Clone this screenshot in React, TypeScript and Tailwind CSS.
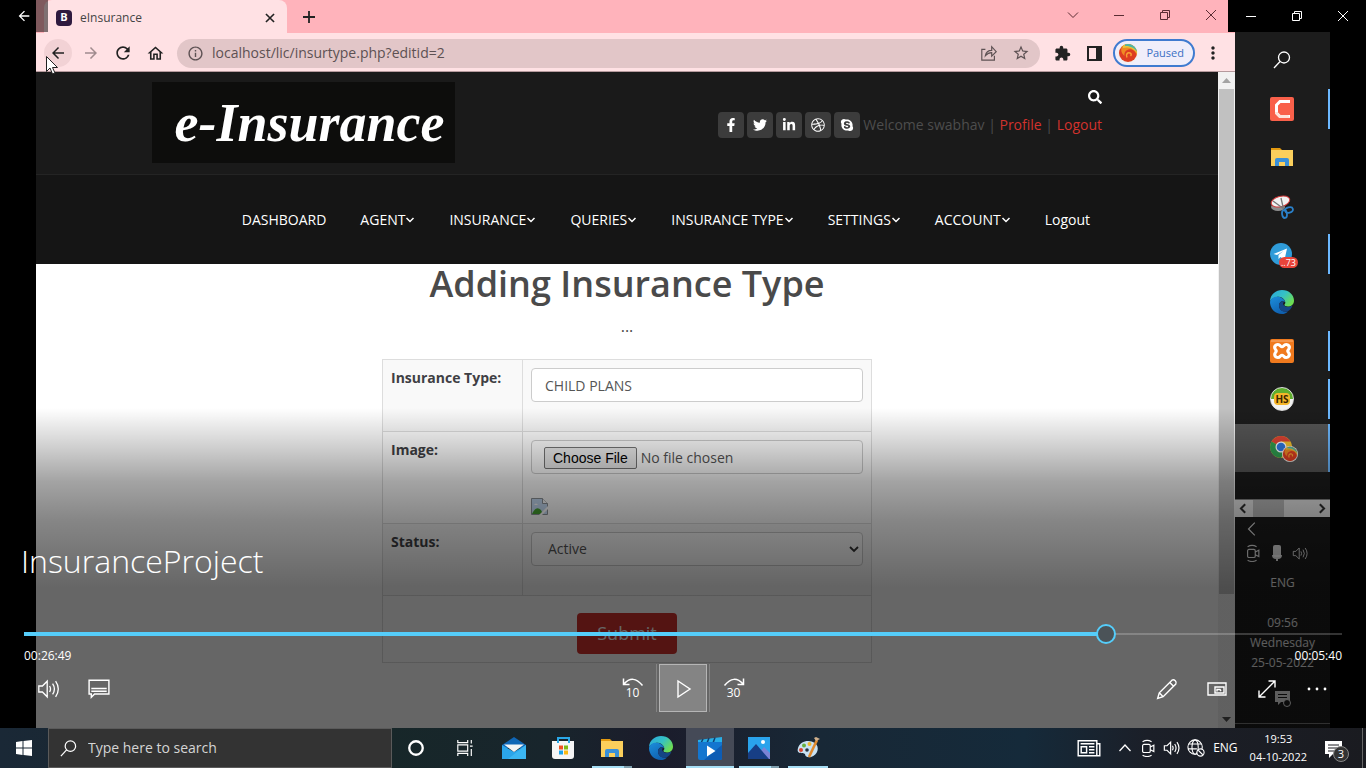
import React, { useState } from "react";
import type { ReactNode } from "react";
import { FaFacebookF, FaTwitter, FaLinkedinIn, FaDribbble, FaSkype, FaSearch } from "react-icons/fa";
import { MdArrowBack, MdArrowForward, MdRefresh, MdOutlineHome, MdInfoOutline, MdStarBorder, MdExtension, MdMoreVert } from "react-icons/md";

const ui = "font-['Open_Sans','Noto_Sans',sans-serif]";

/* ---------- line icons ---------- */

function Glyph({ size = 20, width = 1, children }: { size?: number; width?: number; children: ReactNode }) {
  return (
    <svg width={size} height={size} viewBox="0 0 20 20" fill="none" stroke="currentColor" strokeWidth={width} aria-hidden="true" className="shrink-0">
      {children}
    </svg>
  );
}

const Minimize = () => <Glyph><path d="M5 10.5h10" /></Glyph>;
const Restore = () => <Glyph><path d="M5.5 7.5h7v7h-7zM7.5 7.5v-2h7v7h-2" /></Glyph>;
const Close = () => <Glyph><path d="M5 5l10 10M15 5L5 15" /></Glyph>;
const Magnifier = ({ size = 20 }: { size?: number }) => (
  <Glyph size={size} width={1.3}><circle cx="12" cy="7.5" r="5.5" /><path d="M8 11.5L2 18" /></Glyph>
);
const Speaker = ({ size = 24, width = 1.1 }: { size?: number; width?: number }) => (
  <Glyph size={size} width={width}>
    <path d="M1.5 7.5h3L8.500 3.500v13L4.500 12.500h-3zM10.500 7.500q1.500 2.500 0 5M13 5.500q3 4.500 0 9M15.500 3.500q4.500 6.500 0 13" />
  </Glyph>
);
const Camera = () => (
  <Glyph size={18} width={1.3}><rect x="4" y="6" width="8.500" height="9" rx="1.500" /><path d="M12.500 9l4-2v7l-4-2M4 3q5-3 10 0M4 18q5 3 10 0" /></Glyph>
);

/* ---------- app icons ---------- */

function FolderIcon() {
  return (
    <svg width="24" height="22" viewBox="0 0 24 22" aria-hidden="true">
      <path d="M1 2h9l2 2h11v4H1z" fill="#e39a10" />
      <rect x="1" y="4" width="22" height="16" fill="#fbcf5c" />
      <path d="M5 20v-6q0-2 2-2h10q2 0 2 2v6h-4v-4H9v4z" fill="#3a90d8" />
    </svg>
  );
}

function EdgeIcon() {
  return (
    <svg width="26" height="26" viewBox="0 0 26 26" aria-hidden="true">
      <defs>
        <linearGradient id="edgeTop" x1="0" y1="0" x2="1" y2="0.6">
          <stop offset="0" stopColor="#2aa6dc" /><stop offset="0.55" stopColor="#35c1c5" /><stop offset="1" stopColor="#6ddd52" />
        </linearGradient>
        <linearGradient id="edgeSide" x1="0" y1="0" x2="0.6" y2="1">
          <stop offset="0" stopColor="#1c8fdc" /><stop offset="1" stopColor="#0f5fae" />
        </linearGradient>
      </defs>
      <path d="M1 12C1.500 5 7 1 13 1c7 0 12 5 12 10.500 0 4-3 6-6 6-2.500 0-4-1-3.500-2 1-1 1-2 .6-3C15 9 11 7 7.500 8 4 8.700 2 10.500 1 12z" fill="url(#edgeTop)" />
      <path d="M1 13c.5-4 5-6 8.500-5.200C13 8.500 16 11 16 13c-3-2-6 0-6 3.500 0 4 4 7 9 6C17 24.500 15 25 13 25 6 25 1 19.500 1 13z" fill="url(#edgeSide)" />
      <path d="M10 16.500c0-3 2.500-4.700 5-4.200-.5 1.500-1.500 2.500-.5 3.700 2 2.500 6 2.400 9 .6-1 3-3 5-5 6-5 1-8.500-2.100-8.500-6.100z" fill="#154584" />
    </svg>
  );
}

function CamtasiaIcon() {
  return (
    <svg width="26" height="26" viewBox="0 0 26 26" aria-hidden="true">
      <rect x="1" y="1" width="24" height="24" rx="2" fill="#f9604a" />
      <path d="M21 5.500H11L7.500 9v8l3.500 3.500h10" fill="none" stroke="#fff" strokeWidth="3" />
      <path d="M6 16h3v1l2.300 2h8L21 22H10.300L6 17.700z" fill="#fde3da" />
    </svg>
  );
}

function SnipIcon() {
  return (
    <svg width="26" height="26" viewBox="0 0 26 26" aria-hidden="true">
      <ellipse cx="9" cy="14" rx="7" ry="4" fill="#8d8d8d" />
      <ellipse cx="11.500" cy="8.500" rx="9.500" ry="5.200" fill="#f2f2f2" stroke="#d33b3b" transform="rotate(-14 11.500 8.500)" />
      <path d="M4 8l11 8M12 5l2.500 11" stroke="#777" strokeWidth="1.300" />
      <ellipse cx="20" cy="17" rx="4" ry="2.600" fill="none" stroke="#2a80c9" strokeWidth="1.800" transform="rotate(-15 20 17)" />
      <ellipse cx="15.500" cy="21" rx="2.400" ry="4" fill="none" stroke="#2a80c9" strokeWidth="1.800" transform="rotate(-8 15.500 21)" />
    </svg>
  );
}

function TelegramIcon() {
  return (
    <span className="relative block">
      <svg width="26" height="26" viewBox="0 0 26 26" aria-hidden="true">
        <circle cx="12" cy="13" r="11" fill="#2f9bd8" />
        <path d="M4.500 13L18 7.500l-2.500 11.500-4-3-2 2v-4l5-4-6.500 4z" fill="#fff" />
      </svg>
      <span className="absolute -right-[3px] -bottom-px rounded-full bg-[#e8443a] px-[2px] text-[9px] leading-[11px] text-white">..73</span>
    </span>
  );
}

function XamppIcon() {
  return (
    <svg width="26" height="26" viewBox="0 0 26 26" aria-hidden="true">
      <rect x="1" y="1" width="24" height="24" rx="2" fill="#f07a1e" />
      <path d="M2 3h22" stroke="#f9b27a" />
      <path d="M7 7q2.500-1.500 4.500 1 1.500 1.500 3 0 2-2.500 4.500-1 2.500 2 .5 4.500-1.500 1.500 0 3 2 2.500-.5 4.500-2.500 1.500-4.500-1-1.500-1.500-3 0-2 2.500-4.500 1-2.500-2-.5-4.500 1.500-1.500 0-3-2-2.500.5-4.500z" fill="none" stroke="#fff" strokeWidth="3" />
    </svg>
  );
}

function HeidiIcon() {
  return (
    <span className="flex size-6 items-center justify-center rounded-full border border-[#ddd] bg-[linear-gradient(#5fae2e_50%,#f2f2f2_50%)]">
      <span className="rounded-sm bg-[#f4b62a] px-px text-[10px] leading-3 font-bold text-[#3a2500]">HS</span>
    </span>
  );
}

function ProfileSwirl({ size = 18 }: { size?: number }) {
  return (
    <svg width={size} height={size} viewBox="0 0 20 20" aria-hidden="true" className="shrink-0">
      <circle cx="10" cy="10" r="10" fill="#f3efe9" />
      <circle cx="10" cy="10" r="9" fill="#dd3d22" />
      <path d="M4 3.500a9 9 0 0 1 14.500 9C18 8 14 5.500 10.500 6.500 7 7.500 6 10 6.500 13 3 10.500 2.500 6.500 4 3.500z" fill="#f08a24" />
      <path d="M5 2.600a9 9 0 0 1 13.900 8.400C17.500 6.500 12 3 5 5z" fill="#e6c33a" />
      <path d="M7 1.500a9 9 0 0 1 11.800 7C16.500 5 12 2.600 7 3z" fill="#4db5a8" />
      <path d="M9 14.500c-1.500-3 .5-5.500 3-4.500 1.500.6 1.500 2 .5 2.800" fill="none" stroke="#f9a234" strokeWidth="1.500" />
    </svg>
  );
}

function ChromeIcon() {
  return (
    <span className="relative block">
      <svg width="26" height="26" viewBox="0 0 26 26" aria-hidden="true">
        <circle cx="12" cy="12" r="11" fill="#f7c32e" />
        <path d="M12 12L2.500 6.500A11 11 0 0 1 21.500 6.500H12z" fill="#e04434" />
        <path d="M2.500 6.500A11 11 0 0 0 12 23l5-8-5-3z" fill="#2f9e50" />
        <circle cx="12" cy="12" r="5.500" fill="#fff" /><circle cx="12" cy="12" r="4.300" fill="#2f78e0" />
      </svg>
      <span className="absolute -right-[3px] -bottom-px"><ProfileSwirl size={16} /></span>
    </span>
  );
}

function MailIcon() {
  return (
    <svg width="24" height="24" viewBox="0 0 24 24" aria-hidden="true">
      <path d="M0 9l12-8 12 8v3H0z" fill="#1066b5" />
      <path d="M0 9l12 7 12-7v14H0z" fill="#2ba5ea" /><path d="M24 9v14H6z" fill="#43bdf5" opacity=".7" />
      <path d="M2 8.500h20l-10 7.500z" fill="#f4f4f4" />
    </svg>
  );
}

function StoreIcon() {
  return (
    <svg width="24" height="24" viewBox="0 0 24 24" aria-hidden="true">
      <path d="M7 8V2h11v6" fill="none" stroke="#2aa8e8" strokeWidth="2" />
      <path d="M1 5h22v15q0 3-3 3H4q-3 0-3-3z" fill="#f5f5f5" />
      <path d="M7 5v2M18 5v2" stroke="#2aa8e8" strokeWidth="2" />
      <path d="M8 9.500h4v4H8z" fill="#f05123" /><path d="M13 9.500h4v4h-4z" fill="#7fba16" />
      <path d="M8 14.500h4v4H8z" fill="#1ba3e8" /><path d="M13 14.500h4v4h-4z" fill="#fbb912" />
    </svg>
  );
}

function MoviesIcon() {
  return (
    <svg width="24" height="24" viewBox="0 0 24 24" aria-hidden="true">
      <path d="M0 4l24-3v5H0z" fill="#29aee6" /><path d="M5 3L3 7M11 2L9 7M17 1.500L15 7" stroke="#11406f" strokeWidth="1.500" />
      <path d="M0 6h24v16q0 2-2 2H2q-2 0-2-2z" fill="#1476cf" /><path d="M24 9v13q0 2-2 2H6z" fill="#0d5cb4" />
      <path d="M9 9.500l8.500 5.500L9 20.500z" fill="#fff" />
    </svg>
  );
}

function PhotosIcon() {
  return (
    <svg width="24" height="24" viewBox="0 0 24 24" aria-hidden="true">
      <path d="M1 1h22v22H1z" fill="#2aa3ec" /><path d="M11 18l6-7 6 6v6H11z" fill="#7b83d6" />
      <path d="M1 17l8-9 13 15H1z" fill="#173e85" /><circle cx="16" cy="6" r="2" fill="#fff" />
    </svg>
  );
}

function PaintIcon() {
  return (
    <svg width="24" height="24" viewBox="0 0 24 24" aria-hidden="true">
      <path d="M2 12C4 5 13 3 19 7c5 4 3 12-4 14-4 1-6-1-6-3-2-2-9 1-7-6z" fill="#c9e2f3" />
      <circle cx="5" cy="14" r="2" fill="#d8442f" /><circle cx="8" cy="9.500" r="2" fill="#67b13f" />
      <circle cx="13.500" cy="8" r="2" fill="#f0b62c" /><circle cx="11" cy="14" r="1.800" fill="#26323e" />
      <path d="M13 21l8-17" stroke="#e08a2d" strokeWidth="2.600" /><path d="M20 5l-2-3 2-1 4 2z" fill="#d0b08c" />
    </svg>
  );
}

/* ---------- recorded browser ---------- */

function BrowserChrome() {
  return (
    <header className={`${ui} shrink-0`}>
      <div className="flex h-[33px] bg-[#ffb3bb] pl-2 text-[#222]">
        <div className="flex w-[243px] items-center rounded-t-lg bg-[#ffe1e4] pt-[2px] pr-2 pl-3">
          <span className="flex size-4 items-center justify-center rounded-sm bg-[#2f1a3f] text-[11px] font-bold text-white">B</span>
          <span className="ml-2 flex-1 text-xs text-[#444]">eInsurance</span>
          <button aria-label="Close tab" className="flex"><Glyph size={18} width={1.800}><path d="M5.500 5.500l9 9M14.500 5.500l-9 9" /></Glyph></button>
        </div>
        <button aria-label="New tab" className="ml-3"><Glyph width={1.800}><path d="M10 4v12M4 10h12" /></Glyph></button>
        <div className="mr-[14px] ml-auto flex items-center gap-[26px] pb-1 text-[#5a2d33]">
          <button aria-label="Search tabs"><Glyph><path d="M5 7.500l5 5 5-5" /></Glyph></button>
          <button aria-label="Minimize browser"><Minimize /></button>
          <button aria-label="Restore browser"><Restore /></button>
          <button aria-label="Close browser"><Close /></button>
        </div>
      </div>
      <div className="flex h-[39px] items-center border-b border-[#b59a9d] bg-[#ffe1e4] pt-[2px] pr-3 pl-2 text-[#222]">
        <button aria-label="Back" className="flex size-7 items-center justify-center rounded-full bg-[#f2d2d5]"><MdArrowBack size={18} /></button>
        <button aria-label="Forward" className="ml-[5px] flex size-7 items-center justify-center text-[#a08b8e]"><MdArrowForward size={18} /></button>
        <button aria-label="Reload" className="ml-1 flex size-7 items-center justify-center"><MdRefresh size={20} /></button>
        <button aria-label="Home" className="ml-1 flex size-7 items-center justify-center"><MdOutlineHome size={19} /></button>
        <div className="mr-[14px] ml-2 flex h-[29px] flex-1 items-center rounded-full bg-[#e2c6c8] px-[10px] text-[#5d5153]">
          <MdInfoOutline size={17} />
          <input aria-label="Address" defaultValue="localhost/lic/insurtype.php?editid=2" className="ml-2 min-w-0 flex-1 bg-transparent text-sm text-[#5d5153] outline-none" />
          <button aria-label="Share" className="mr-[14px]"><Glyph size={18} width={1.300}><path d="M6 6H2v12h14v-5M6 13q1-6 7-6V3l5 5.500-5 5v-4q-4 0-7 3.500z" /></Glyph></button>
          <button aria-label="Bookmark"><MdStarBorder size={18} /></button>
        </div>
        <button aria-label="Extensions" className="mr-4 flex"><MdExtension size={17} /></button>
        <button aria-label="Side panel" className="mr-[11px] flex"><svg width="15" height="15" viewBox="0 0 15 15" aria-hidden="true"><path d="M1 1h13v13H1z" fill="none" stroke="currentColor" strokeWidth="2" /><path d="M9 1h5v13H9z" fill="currentColor" /></svg></button>
        <button className="mr-2 flex h-7 items-center rounded-full border-2 border-[#3f7bd0] bg-[#f0eefa] pr-[9px] pl-[3px] text-[11px] text-[#3a6fc4]"><ProfileSwirl size={20} /><span className="ml-2">Paused</span></button>
        <button aria-label="Menu" className="flex"><MdMoreVert size={20} /></button>
      </div>
    </header>
  );
}

const menu = [
  { label: "DASHBOARD", drop: false }, { label: "AGENT", drop: true }, { label: "INSURANCE", drop: true },
  { label: "QUERIES", drop: true }, { label: "INSURANCE TYPE", drop: true }, { label: "SETTINGS", drop: true },
  { label: "ACCOUNT", drop: true }, { label: "Logout", drop: false },
];

const socials = [
  { name: "Facebook", Icon: FaFacebookF }, { name: "Twitter", Icon: FaTwitter }, { name: "LinkedIn", Icon: FaLinkedinIn },
  { name: "Dribbble", Icon: FaDribbble }, { name: "Skype", Icon: FaSkype },
];

function SiteHeader() {
  return (
    <div>
      <div className="flex h-[103px] justify-between border-b border-[#242424] bg-[#1a1a1a] px-[116px] pt-[10px]">
        <a href="#home" className="flex h-[81px] w-[303px] items-center justify-center bg-[#0d0d0c] pl-3 font-['Liberation_Serif',serif] text-[54px] leading-none font-bold text-white italic">e-Insurance</a>
        <div className="flex flex-col items-end">
          <button aria-label="Search" className="flex h-[30px] w-[14px] items-center text-white"><FaSearch size={14} /></button>
          <div className="flex items-center text-sm text-[#4d4d4d]">
            {socials.map(({ name, Icon }) => (
              <a key={name} href={`#${name}`} aria-label={name} className="mr-[3px] flex size-[26px] items-center justify-center rounded-sm bg-[#3c3c3c] text-white"><Icon size={14} /></a>
            ))}
            <span>Welcome swabhav&nbsp;|&nbsp;</span>
            <a href="#profile" className="text-[#d2322d]">Profile</a>
            <span>&nbsp;|&nbsp;</span>
            <a href="#logout" className="text-[#d2322d]">Logout</a>
          </div>
        </div>
      </div>
      <nav className="flex h-[89px] items-center justify-end gap-[34px] bg-[#151515] pr-32 text-sm text-white">
        {menu.map((m) => (
          <a key={m.label} href={`#${m.label}`} className="flex items-center whitespace-nowrap">
            {m.label}
            {m.drop && <svg width="10" height="6" viewBox="0 0 10 6" fill="none" stroke="currentColor" strokeWidth="1.500" aria-hidden="true"><path d="M1.500 1L5 4.500 8.500 1" /></svg>}
          </a>
        ))}
      </nav>
    </div>
  );
}

const field = "h-[34px] w-full rounded-sm border border-[#ccc] bg-white px-[13px] text-sm text-[#555]";
const head = "w-[140px] border border-[#ddd] px-2 py-2 text-left align-top text-sm font-bold text-[#3f3f44]";
const cell = "border border-[#ddd] p-2 align-top";

function InsuranceForm() {
  return (
    <main className="flex flex-col items-center bg-white">
      <h1 className="text-[36px] leading-10 font-semibold text-[#4a4a4a]">Adding Insurance Type</h1>
      <p className="mt-3 mb-[22px] text-base leading-[21px] text-[#4a4a4a]">...</p>
      <form onSubmit={(e) => e.preventDefault()}>
        <table className="w-[490px] border-collapse">
          <tbody>
            <tr className="h-[72px] bg-[#f9f9f9]">
              <th className={head}><label htmlFor="type">Insurance Type:</label></th>
              <td className={cell}><input id="type" className={field} defaultValue="CHILD PLANS" /></td>
            </tr>
            <tr className="h-[92px]">
              <th className={head}><label htmlFor="image">Image:</label></th>
              <td className={cell}>
                <input id="image" type="file" className={`${field} block pt-[6px] pl-3 file:mr-1 file:h-[22px] file:rounded-xs file:border file:border-solid file:border-[#767676] file:bg-[#efefef] file:px-2 file:font-['Liberation_Sans',sans-serif] file:text-sm file:leading-5 file:text-black`} />
                <svg width="17" height="17" viewBox="0 0 17 17" aria-label="Missing image" className="mt-6 block">
                  <path d="M.5.5h11l5 5v11H.5z" fill="#c6dcf5" stroke="#8d9399" /><path d="M11.500.5v5h5" fill="#fff" stroke="#8d9399" />
                  <path d="M1 16q4-9 9-4l2 4z" fill="#46a431" /><path d="M3 7q2-3 4 0z" fill="#fff" /><path d="M8 17l9-9v3l-6 6z" fill="#fff" />
                </svg>
              </td>
            </tr>
            <tr className="h-[72px] bg-[#f9f9f9]">
              <th className={head}><label htmlFor="status">Status:</label></th>
              <td className={cell}>
                <div className="grid items-center">
                  <select id="status" defaultValue="Active" className={`${field} col-start-1 row-start-1 appearance-none pl-4`}>
                    <option>Active</option><option>Inactive</option>
                  </select>
                  <svg width="10" height="7" viewBox="0 0 10 7" fill="none" stroke="#333" strokeWidth="1.800" aria-hidden="true" className="pointer-events-none col-start-1 row-start-1 mr-1 justify-self-end"><path d="M1 1l4 4 4-4" /></svg>
                </div>
              </td>
            </tr>
            <tr className="h-[67px]">
              <td colSpan={2} className="border border-[#ddd] pt-2 text-center">
                <button type="submit" className="h-[41px] rounded bg-[#d2322d] px-5 text-lg text-white">Submit</button>
              </td>
            </tr>
          </tbody>
        </table>
      </form>
    </main>
  );
}

function PageScrollbar() {
  return (
    <div className="flex w-[17px] shrink-0 flex-col items-center bg-[#f1f1f1] px-px" aria-hidden="true">
      <svg width="9" height="17" viewBox="0 0 9 17"><path d="M0 11l4.500-5L9 11z" fill="#a3a3a3" /></svg>
      <div className="w-full flex-[505] bg-[#c1c1c1]" />
      <div className="flex-[117]" />
      <svg width="9" height="17" viewBox="0 0 9 17"><path d="M0 6l4.500 5L9 6z" fill="#505050" /></svg>
    </div>
  );
}

const sideApps = [
  { name: "Search", icon: <Magnifier size={20} />, open: false, active: false },
  { name: "Camtasia", icon: <CamtasiaIcon />, open: true, active: false },
  { name: "File Explorer", icon: <FolderIcon />, open: false, active: false },
  { name: "Snipping Tool", icon: <SnipIcon />, open: false, active: false },
  { name: "Telegram", icon: <TelegramIcon />, open: true, active: false },
  { name: "Edge", icon: <EdgeIcon />, open: false, active: false },
  { name: "XAMPP", icon: <XamppIcon />, open: true, active: false },
  { name: "HeidiSQL", icon: <HeidiIcon />, open: true, active: false },
  { name: "Chrome", icon: <ChromeIcon />, open: true, active: true },
];

function RecordedTaskbar() {
  return (
    <aside className={`${ui} flex w-[95px] shrink-0 flex-col bg-[#1c1c1c] text-xs text-white`}>
      <div className="flex h-[472px] flex-col pt-9">
        {sideApps.map((a) => (
          <button key={a.name} aria-label={a.name} className={`flex flex-1 items-center ${a.active ? "bg-[#555]" : ""}`}>
            <span className="flex flex-1 justify-center pr-px">{a.icon}</span>
            <span className={`-ml-[2px] w-[2px] ${a.active ? "h-full" : "h-10"} ${a.open ? "bg-[#6cb8ff]" : ""}`} />
          </button>
        ))}
      </div>
      <div className="mt-[27px] flex h-[18px] items-center justify-between border-t border-[#888] bg-[#f0f0f0] text-[#333]" aria-hidden="true">
        <Glyph size={17} width={2.400}><path d="M12 5l-5 5 5 5" /></Glyph>
        <span className="mr-7 h-full w-[31px] bg-[#c1c1c1]" />
        <Glyph size={17} width={2.400}><path d="M8 5l5 5-5 5" /></Glyph>
      </div>
      <div className="flex flex-1 flex-col text-white/90">
        <div className="flex h-6 items-center pl-[9px]"><Glyph size={18} width={1.300}><path d="M12 3l-7 7 7 7" /></Glyph></div>
        <div className="flex h-6 items-center justify-between pr-[21px] pl-[9px]">
          <Camera />
          <svg width="12" height="18" viewBox="0 0 12 18" fill="currentColor" aria-hidden="true"><rect x="2" y="1" width="8" height="12" rx="2" /><path d="M1 11h10q0 4-4 4v2H5v-2q-4 0-4-4z" /></svg>
          <Speaker size={17} />
        </div>
        <p className="mt-2 text-center leading-5">ENG</p>
        <p className="mt-5 text-center leading-5">09:56</p>
        <p className="text-center leading-5">Wednesday</p>
        <p className="text-center leading-5">25-05-2022</p>
        <div className="mt-[17px] flex justify-center">
          <svg width="18" height="18" viewBox="0 0 18 18" aria-hidden="true"><path d="M1 1h15v11H7l-3 3v-3H1z" fill="currentColor" /><path d="M4 4.500h9M4 7.500h9" stroke="#1c1c1c" /><circle cx="13" cy="13" r="3.500" fill="#1c1c1c" stroke="currentColor" /></svg>
        </div>
        <div className="mt-auto mb-1 h-px bg-[#777]" />
      </div>
    </aside>
  );
}

/* ---------- player ---------- */

const ctl = "flex size-12 items-center justify-center pt-[2px]";

function Controls() {
  const [time, setTime] = useState(1609);
  const done = (time / 1949) * 100;
  return (
    <div className={`${ui} absolute inset-0 flex flex-col justify-end text-white`}>
      <h2 className="px-[21px] text-[32px] leading-[46px] font-light">InsuranceProject</h2>
      <div className="mt-10 px-6">
        <input
          type="range" aria-label="Seek" min={0} max={1949} value={time} onChange={(e) => setTime(Number(e.target.value))}
          style={{ backgroundSize: `${done}% 4px, 100% 2px` }}
          className="block h-5 w-full appearance-none bg-[linear-gradient(#55cdfa,#55cdfa),linear-gradient(#ffffff33,#ffffff33)] bg-[position:left_center] bg-no-repeat [&::-webkit-slider-thumb]:size-5 [&::-webkit-slider-thumb]:appearance-none [&::-webkit-slider-thumb]:rounded-full [&::-webkit-slider-thumb]:border-2 [&::-webkit-slider-thumb]:border-solid [&::-webkit-slider-thumb]:border-[#55cdfa] [&::-webkit-slider-thumb]:bg-[#4b5358]"
        />
        <div className="flex h-5 items-end justify-between text-xs"><span>00:26:49</span><span>00:05:40</span></div>
      </div>
      <div className="mb-4 grid grid-cols-[1fr_auto_1fr] px-[25px]">
        <div className="flex gap-[2px]">
          <button aria-label="Volume" className={ctl}><Speaker /></button>
          <button aria-label="Subtitles" className={ctl}><Glyph size={22} width={1.300}><path d="M1 2h18v12.500H6l-3 3v-3H1zM3 9.500h14M3 12h14" /></Glyph></button>
        </div>
        <div className="flex gap-[2px]">
          <button aria-label="Back 10 seconds" className={`${ctl} flex-col border-r border-white/20 text-xs`}>
            <svg width="22" height="8" viewBox="0 0 22 8" fill="none" stroke="currentColor" strokeWidth="1.500" aria-hidden="true"><path d="M1.500 0.500v6h6M2 6q9-10 18.500 1.500" /></svg>
            <span className="leading-[14px]">10</span>
          </button>
          <button aria-label="Play" className={`${ctl} border border-white/40 bg-white/20`}><Glyph width={1.400}><path d="M5 2l12 8-12 8z" /></Glyph></button>
          <button aria-label="Forward 30 seconds" className={`${ctl} flex-col border-l border-white/20 text-xs`}>
            <svg width="22" height="8" viewBox="0 0 22 8" fill="none" stroke="currentColor" strokeWidth="1.500" aria-hidden="true"><path d="M20.500 0.500v6h-6M20 6q-9-10-18.500 1.500" /></svg>
            <span className="leading-[14px]">30</span>
          </button>
        </div>
        <div className="flex justify-end gap-[2px]">
          <button aria-label="Edit" className={ctl}><Glyph size={22} width={1.300}><path d="M1.500 18.500l1.500-5L14.500 2q1.500-1 3 .5t.5 3L6.500 17zM3 13.500l3.500 3.500M12.500 4l3.500 3.500" /></Glyph></button>
          <button aria-label="Mini view" className={ctl}><Glyph width={1.400}><path d="M1 4h18v12H1zM8 8h9v6H8zM10 12.500V10.500h3l1 1.500" /></Glyph></button>
          <button aria-label="Full screen" className={ctl}><Glyph size={20} width={1.400}><path d="M2 18L18 2M11.500 2H18v6.500M2 11.500V18h6.500" /></Glyph></button>
          <button aria-label="More" className={ctl}><svg width="20" height="4" viewBox="0 0 20 4" fill="currentColor" aria-hidden="true"><circle cx="2" cy="2" r="1.400" /><circle cx="10" cy="2" r="1.400" /><circle cx="18" cy="2" r="1.400" /></svg></button>
        </div>
      </div>
    </div>
  );
}

function Player() {
  return (
    <section className="relative flex flex-1 bg-black px-9">
      <div className="flex min-w-0 flex-1 flex-col bg-white">
        <BrowserChrome />
        <div className={`${ui} flex flex-1`}>
          <div className="min-w-0 flex-1"><SiteHeader /><InsuranceForm /></div>
          <PageScrollbar />
        </div>
      </div>
      <RecordedTaskbar />
      <div className="pointer-events-none absolute inset-x-0 bottom-0 h-80 bg-[linear-gradient(#00000000,#00000033_13%,#0000005c_23%,#00000079_35%,#00000099_56%)]" />
      <Controls />
      <button aria-label="Back to library" className="absolute top-0 left-0 flex h-8 w-12 items-center justify-center bg-black/50 text-white"><MdArrowBack size={16} /></button>
      <div className="absolute top-0 right-0 flex h-8 w-[138px] items-center justify-around bg-black text-white">
        <button aria-label="Minimize"><Minimize /></button>
        <button aria-label="Restore"><Restore /></button>
        <button aria-label="Close"><Close /></button>
      </div>
      <svg width="12" height="19" viewBox="0 0 12 19" className="absolute top-14 left-[46px]" aria-hidden="true"><path d="M.5.500v15l3.500-3.500 2.500 6 2.500-1-2.500-5.500h5z" fill="#fff" stroke="#222" /></svg>
    </section>
  );
}

/* ---------- desktop taskbar ---------- */

const apps = [
  { name: "Cortana", icon: <Glyph size={18} width={2.600}><circle cx="10" cy="10" r="7.500" /></Glyph>, bar: "" },
  { name: "Task View", icon: <Glyph size={18} width={1.300}><path d="M2 1v3h11V1M2 6.500h11v7H2zM2 19v-3h11v3M17 1v4M17 11v8M15.500 8h3" /></Glyph>, bar: "" },
  { name: "Mail", icon: <MailIcon />, bar: "" },
  { name: "Microsoft Store", icon: <StoreIcon />, bar: "" },
  { name: "File Explorer", icon: <FolderIcon />, bar: "w-10 border-r-8 border-[#7f9fae] bg-[#a6def5]" },
  { name: "Edge", icon: <EdgeIcon />, bar: "" },
  { name: "Movies & TV", icon: <MoviesIcon />, bar: "w-12 bg-[#a6def5]" },
  { name: "Photos", icon: <PhotosIcon />, bar: "w-10 border-r-8 border-[#7f9fae] bg-[#a6def5]" },
  { name: "Paint", icon: <PaintIcon />, bar: "w-10 bg-[#a6def5]" },
];

function Taskbar() {
  return (
    <footer className={`${ui} flex h-10 shrink-0 items-stretch bg-[linear-gradient(90deg,#1a2836,#172729_28%,#18252c_40%,#1b1c2b_48%,#182836_60%,#152a3a_75%,#1b1f28_84%,#1a1b20)] text-white`}>
      <button aria-label="Start" className="flex w-12 items-center justify-center">
        <svg width="16" height="16" viewBox="0 0 16 16" fill="currentColor" aria-hidden="true"><path d="M0 2l6.500-1v6.500H0zM7.500 1L16 0v7.500H7.500zM0 8.500h6.500V15L0 14zM7.500 8.500H16V16l-8.500-1z" /></svg>
      </button>
      <label className="flex w-[344px] items-center border border-[#5a5a5a] bg-[#333] pl-[10px]">
        <Magnifier size={19} />
        <input aria-label="Search" placeholder="Type here to search" className="ml-[10px] min-w-0 flex-1 bg-transparent text-sm outline-none placeholder:text-[#d5d5d5]" />
      </label>
      <div className="flex gap-px">
        {apps.map((a) => (
          <button key={a.name} aria-label={a.name} className={`flex w-12 flex-col items-center ${a.name === "Movies & TV" ? "bg-[#454a57]" : ""}`}>
            <span className="flex flex-1 items-center pt-[2px]">{a.icon}</span>
            <span className={`h-[2px] ${a.bar}`} />
          </button>
        ))}
      </div>
      <div className="ml-auto flex items-center text-xs">
        <button aria-label="News"><Glyph size={24} width={1.200}><path d="M1 4h15.500v12.500H1zM16.500 6.500H19v10h-3M3 6.500h11.500M3.500 9h4.500v5H3.500zM10 9h4.500M10 11.500h4.500M10 14h4.500" /></Glyph></button>
        <button aria-label="Show hidden icons" className="ml-[14px]"><Glyph size={20} width={1.300}><path d="M4.500 13l5.500-6 5.500 6" /></Glyph></button>
        <button aria-label="Camera in use" className="ml-1"><Camera /></button>
        <button aria-label="Volume" className="ml-[6px]"><Speaker size={18} width={1.300} /></button>
        <button aria-label="Network" className="ml-[6px]"><Glyph size={18} width={1.200}><circle cx="9" cy="9" r="8" /><ellipse cx="9" cy="9" rx="3.500" ry="8" /><path d="M2 5.500h14M1 11h10" /><circle cx="15" cy="15" r="4" fill="#1b1f28" /><path d="M12.500 12.500l5 5" /></Glyph></button>
        <span className="ml-2">ENG</span>
        <div className="ml-3 text-center text-[11px] leading-[18px]"><p>19:53</p><p>04-10-2022</p></div>
        <button aria-label="3 notifications" className="relative mr-[19px] ml-[18px] h-7 w-[18px]">
          <svg width="18" height="18" viewBox="0 0 18 18" aria-hidden="true" className="mt-1"><path d="M0 0h17v13H8l-4 4v-4H0z" fill="currentColor" /><path d="M3 4h11M3 7h11M3 10h7" stroke="#1a1b20" /></svg>
          <span className="absolute top-3 left-2 flex size-4 items-center justify-center rounded-full border border-[#888] bg-[#333] text-[11px]">3</span>
        </button>
        <span className="mr-[3px] h-10 w-px bg-[#666]" />
      </div>
    </footer>
  );
}

export default function App() {
  return (
    <div className="flex min-h-screen flex-col bg-black">
      <Player />
      <Taskbar />
    </div>
  );
}
